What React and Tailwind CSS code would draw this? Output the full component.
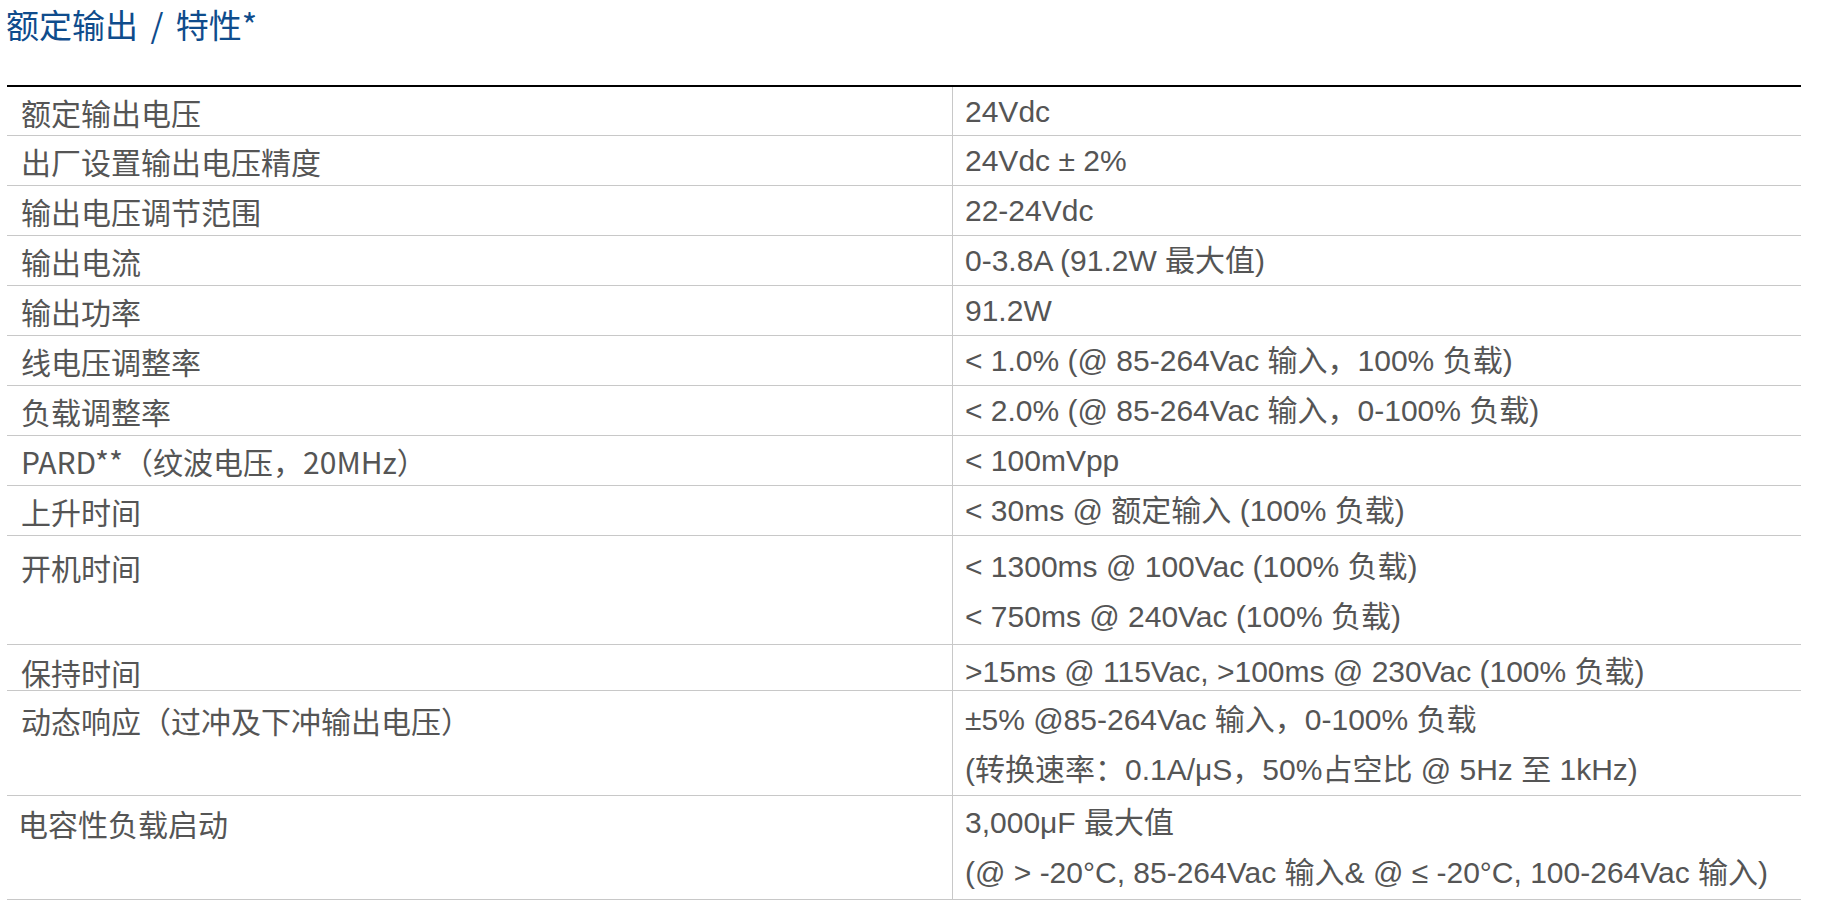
import React from "react";

const rows = [
  { label: "额定输出电压", values: ["24Vdc"], h: "h-[49px]", pt: "pt-px", lh: "leading-[48px]" },
  { label: "出厂设置输出电压精度", values: ["24Vdc ± 2%"] },
  { label: "输出电压调节范围", values: ["22-24Vdc"] },
  { label: "输出电流", values: ["0-3.8A (91.2W 最大值)"] },
  { label: "输出功率", values: ["91.2W"] },
  { label: "线电压调整率", values: ["< 1.0% (@ 85-264Vac 输入，100% 负载)"] },
  { label: "负载调整率", values: ["< 2.0% (@ 85-264Vac 输入，0-100% 负载)"] },
  { label: "PARD**（纹波电压，20MHz）", values: ["< 100mVpp"] },
  { label: "上升时间", values: ["< 30ms @ 额定输入 (100% 负载)"] },
  {
    label: "开机时间",
    values: ["< 1300ms @ 100Vac (100% 负载)", "< 750ms @ 240Vac (100% 负载)"],
    h: "h-[109px]",
    pt: "pt-[6px]",
    lh: "leading-[50px]",
  },
  {
    label: "保持时间",
    values: [">15ms @ 115Vac, >100ms @ 230Vac (100% 负载)"],
    h: "h-[46px]",
    pt: "pt-[6px]",
    lh: "leading-[42px]",
  },
  {
    label: "动态响应（过冲及下冲输出电压）",
    values: ["±5% @85-264Vac 输入，0-100% 负载", "(转换速率：0.1A/μS，50%占空比 @ 5Hz 至 1kHz)"],
    h: "h-[105px]",
    pt: "pt-[4px]",
    lh: "leading-[50px]",
  },
  {
    label: "电容性负载启动",
    values: ["3,000μF 最大值", "(@ > -20°C, 85-264Vac 输入& @ ≤ -20°C, 100-264Vac 输入)"],
    h: "h-[104px]",
    pt: "pt-[2px]",
    lh: "leading-[50px]",
    shift: true,
  },
];

export default function App() {
  return (
    <div className="bg-white min-h-screen w-full">
      {/* Section title */}
      <h2 className="h-[48px] pl-[6px] mb-[37px] text-[33px] leading-[48px] [word-spacing:5px] text-[#0f4c8c] font-['Noto_Sans_CJK_SC',sans-serif] font-normal">
        额定输出 / 特性*
      </h2>

      {/* Spec table */}
      <div className="ml-[7px] w-[1794px] border-t-2 border-black text-[30px] text-[#555555]">
        {rows.map((row, idx) => (
          <div
            key={idx}
            className={`grid grid-cols-[945px_1fr] border-b border-[#c8c8c8] ${row.h || "h-[50px]"}`}
          >
            <div
              className={`${row.shift ? "pl-[11px]" : "pl-[14px]"} ${row.pt || "pt-px"} ${row.lh || "leading-[48px]"} font-['Noto_Sans_CJK_SC',sans-serif] whitespace-nowrap`}
            >
              {row.label}
            </div>
            <div
              className={`border-l border-[#c8c8c8] pl-[12px] ${row.pt || "pt-px"} ${row.lh || "leading-[48px]"} font-['Liberation_Sans','Noto_Sans_CJK_SC',sans-serif] whitespace-nowrap`}
            >
              {row.values.map((v, i) => (
                <p key={i}>{v}</p>
              ))}
            </div>
          </div>
        ))}
      </div>
    </div>
  );
}
